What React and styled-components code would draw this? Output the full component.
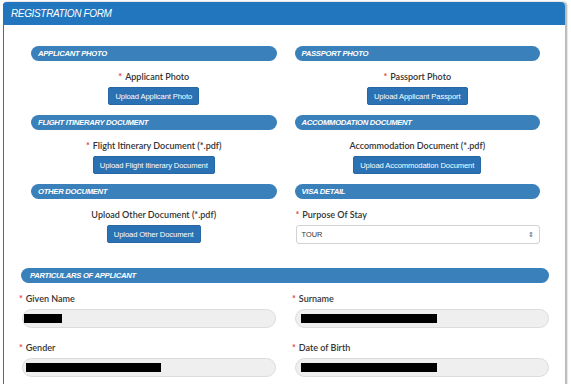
import React from 'react';
import styled, { createGlobalStyle } from 'styled-components';

const GlobalStyle = createGlobalStyle`
  html, body {
    margin: 0;
    padding: 0;
    background: #ffffff;
    overflow: hidden;
  }
`;

const Page = styled.div({
  width: '571px',
  height: '384px',
  padding: '2px 0 0 3px',
  boxSizing: 'border-box',
  overflow: 'hidden',
});

const Panel = styled.div({
  width: '563px',
  height: '400px',
  boxSizing: 'border-box',
  borderLeft: '1px solid #2a78ba',
  borderRight: '1px solid #b9bcbf',
  boxShadow: '1px 0 2px rgba(0,0,0,0.35)',
  borderRadius: '4px 4px 0 0',
  background: '#fff',
});

const Header = styled.div({
  height: '23px',
  background: '#2176bd',
  borderRadius: '4px 4px 0 0',
  color: '#fff',
  fontFamily: '"Liberation Sans", Arial, sans-serif',
  fontStyle: 'italic',
  fontSize: '10px',
  letterSpacing: '-0.35px',
  display: 'flex',
  alignItems: 'center',
  paddingLeft: '8px',
  marginLeft: '-1px',
});

const Body = styled.div({
  padding: '21px 16px 0 16px',
});

const Grid = styled.div({
  display: 'grid',
  gridTemplateColumns: '1fr 1fr',
  columnGap: '18px',
  padding: '0 9px 0 11px',
});

const Section = styled.div({
  display: 'flex',
  flexDirection: 'column',
  alignItems: 'center',
  paddingBottom: '10px',
});

const Pill = styled.div`
  align-self: stretch;
  height: 15px;
  border-radius: 8px;
  background: #3a80bb;
  color: #fff;
  font-family: "Liberation Sans", Arial, sans-serif;
  font-weight: bold;
  font-style: italic;
  font-size: 7.7px;
  letter-spacing: -0.3px;
  display: flex;
  align-items: center;
  padding-left: ${p => p.$pad || 7}px;
  margin-bottom: ${p => p.$gap || 10}px;
`;

const Label = styled.div`
  font-family: Lato, "Liberation Sans", sans-serif;
  font-weight: 600;
  font-size: 9px;
  line-height: 12px;
  color: #333;
  align-self: ${p => p.$left ? 'flex-start' : 'center'};
  margin-bottom: ${p => p.$mb || 4}px;
  margin-left: ${p => p.$ml || 0}px;
`;

const Star = styled.span({
  color: '#e2323a',
  marginRight: '3px',
});

const Button = styled.div({
  height: '18px',
  boxSizing: 'border-box',
  padding: '0 6px',
  background: '#2a72b4',
  border: '1px solid #2767a3',
  borderRadius: '2px',
  color: '#fff',
  fontFamily: '"Liberation Sans", Arial, sans-serif',
  fontSize: '7.6px',
  letterSpacing: '-0.1px',
  display: 'flex',
  alignItems: 'center',
});

const Select = styled.div({
  alignSelf: 'stretch',
  height: '19px',
  boxSizing: 'border-box',
  border: '1px solid #d2d2d2',
  borderRadius: '3px',
  background: '#fff',
  display: 'flex',
  alignItems: 'center',
  justifyContent: 'space-between',
  padding: '0 5px 0 5px',
  fontFamily: '"Liberation Sans", Arial, sans-serif',
  fontSize: '7.4px',
  color: '#333',
  marginLeft: '1px',
});

const Arrows = styled.span({
  fontSize: '7px',
  color: '#555',
  lineHeight: 1,
});

const Particulars = styled.div({
  marginTop: '14px',
  paddingLeft: '1px',
});

const Fields = styled.div({
  display: 'grid',
  gridTemplateColumns: '1fr 1fr',
  columnGap: '18px',
  rowGap: '14px',
});

const Field = styled.div({
  display: 'flex',
  flexDirection: 'column',
});

const Input = styled.div({
  height: '19px',
  boxSizing: 'border-box',
  border: '1px solid #dcdcdc',
  borderRadius: '10px',
  background: '#efefef',
  display: 'flex',
  alignItems: 'center',
  marginLeft: '1px',
});

const Redact = styled.span`
  display: block;
  height: 9px;
  background: #000;
  margin-left: ${p => p.$left}px;
`;

const upper = [
  { title: 'APPLICANT PHOTO', label: 'Applicant Photo', req: true, button: 'Upload Applicant Photo' },
  { title: 'PASSPORT PHOTO', label: 'Passport Photo', req: true, button: 'Upload Applicant Passport' },
  { title: 'FLIGHT ITINERARY DOCUMENT', label: 'Flight Itinerary Document (*.pdf)', req: true, button: 'Upload Flight Itinerary Document' },
  { title: 'ACCOMMODATION DOCUMENT', label: 'Accommodation Document (*.pdf)', req: false, button: 'Upload Accommodation Document' },
  { title: 'OTHER DOCUMENT', label: 'Upload Other Document (*.pdf)', req: false, button: 'Upload Other Document' },
];

const fields = [
  { label: 'Given Name', left: 1, width: 38 },
  { label: 'Surname', left: 5, width: 136 },
  { label: 'Gender', left: 3, width: 135 },
  { label: 'Date of Birth', left: 5, width: 136 },
];

function UploadSection({ title, label, req, button }) {
  return (
    <Section>
      <Pill>{title}</Pill>
      <Label>{req && <Star>*</Star>}{label}</Label>
      <Button>{button}</Button>
    </Section>
  );
}

export default function App() {
  return (
    <Page>
      <GlobalStyle />
      <Panel>
        <Header>REGISTRATION FORM</Header>
        <Body>
          <Grid>
            {upper.map(s => <UploadSection key={s.title} {...s} />)}
            <Section>
              <Pill>VISA DETAIL</Pill>
              <Label $left $ml={1}><Star>*</Star>Purpose Of Stay</Label>
              <Select>
                <span>TOUR</span>
                <Arrows>⇕</Arrows>
              </Select>
            </Section>
          </Grid>
          <Particulars>
            <Pill $pad={9} $gap={10}>PARTICULARS OF APPLICANT</Pill>
            <Fields>
              {fields.map(f => (
                <Field key={f.label}>
                  <Label $left $mb={4} $ml={-2}><Star>*</Star>{f.label}</Label>
                  <Input>
                    <Redact $left={f.left} style={{ width: f.width }} />
                  </Input>
                </Field>
              ))}
            </Fields>
          </Particulars>
        </Body>
      </Panel>
    </Page>
  );
}
